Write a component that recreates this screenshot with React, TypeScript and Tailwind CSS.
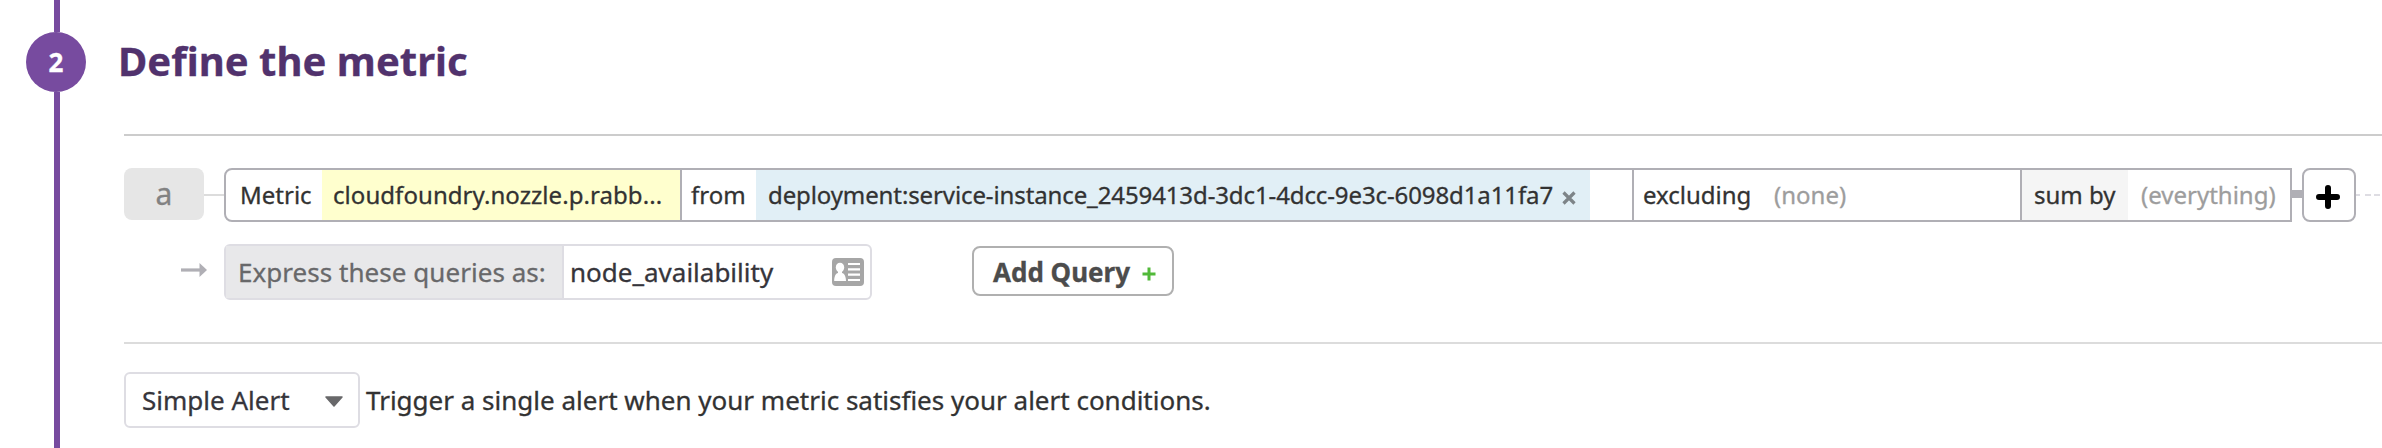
import React from "react";

function ContactCardIcon() {
  return (
    <svg width="32" height="28" viewBox="0 0 32 28" className="shrink-0">
      <rect width="32" height="28" rx="4" fill="#a6a6a6" />
      <ellipse cx="8" cy="9.500" rx="4.200" ry="4.800" fill="#fff" />
      <path d="M6 12h4v3c2.400 .6 4 3.500 4 8H2.200c0-4.500 1.400-7.400 3.800-8z" fill="#fff" />
      <path d="M16 6h12M16 11.300h12M16 16.600h12M16 22h12" stroke="#fff" strokeWidth="2.200" />
    </svg>
  );
}

function StepRail() {
  return (
    <div className="flex w-[60px] shrink-0 flex-col items-center">
      <div className="ml-[2px] h-8 w-[6px] bg-[#774b9f]" />
      <div className="flex h-[60px] w-[60px] items-center justify-center rounded-full bg-[#774b9f] text-[26px] font-bold text-white">
        2
      </div>
      <div className="ml-[2px] w-[6px] grow bg-[#774b9f]" />
    </div>
  );
}

function QueryRow() {
  return (
    <div className="flex h-[54px] items-start text-[24px] text-[#323232]">
      <div className="flex h-[52px] w-20 shrink-0 items-center justify-center rounded-lg bg-[#e6e6e6] pb-px text-[30px] text-[#828282]">
        a
      </div>
      <div className="mt-[26px] h-[2px] w-5 shrink-0 bg-[#dcdcdc]" />
      <div className="flex h-[54px] w-[2068px] shrink-0 overflow-hidden rounded-l-lg border-2 border-[#b0afb5] leading-[50px]">
        <div className="w-24 shrink-0 pl-[14px]">Metric</div>
        <div className="w-[358px] shrink-0 bg-[#ffffce] pl-[11px] tracking-[0.06px]">
          cloudfoundry.nozzle.p.rabb...
        </div>
        <div className="w-[76px] shrink-0 border-l-2 border-[#b0afb5] pl-[9px]">from</div>
        <div className="flex w-[834px] shrink-0 bg-[#e1eff6] pl-3">
          <span className="tracking-[-0.11px]">
            deployment:service-instance_2459413d-3dc1-4dcc-9e3c-6098d1a11fa7
          </span>
          <svg width="14" height="14" viewBox="0 0 14 14" className="ml-[9px] mt-[21px]">
            <path d="M1.500 1.500l11 11M12.500 1.500l-11 11" stroke="#7d8488" strokeWidth="3.200" />
          </svg>
        </div>
        <div className="w-[42px] shrink-0" />
        <div className="w-[142px] shrink-0 border-l-2 border-[#b0afb5] pl-[9px]">excluding</div>
        <div className="w-[246px] shrink-0 text-[#9d9d9d]">(none)</div>
        <div className="w-[108px] shrink-0 border-l-2 border-[#b0afb5] bg-[#f5f5f5] pl-3">sum by</div>
        <div className="pl-[13px] text-[#9d9d9d]">(everything)</div>
      </div>
      <div className="mt-[22px] h-2 w-[10px] shrink-0 bg-[#b0afb5]" />
      <button className="flex h-[54px] w-[54px] shrink-0 items-center justify-center rounded-lg border-2 border-[#b0afb5]">
        <svg width="24" height="24" viewBox="0 0 24 24" className="mr-[2px] mt-[3px]">
          <path d="M12 3v18M3 12h18" stroke="#000" strokeWidth="6" strokeLinecap="round" />
        </svg>
      </button>
      <svg width="26" height="2" viewBox="0 0 26 2" className="mt-[26px] shrink-0">
        <path d="M0 1h4M9 1h6M18 1h6" stroke="#dedde3" strokeWidth="2" />
      </svg>
    </div>
  );
}

function ExpressionRow() {
  return (
    <div className="mt-[22px] flex h-14 items-start text-[26px]">
      <svg width="26" height="14" viewBox="0 0 26 14" className="ml-[57px] mr-[17px] mt-[19px] shrink-0">
        <path d="M0 7h19" stroke="#b0afb5" strokeWidth="3.200" />
        <path d="M18.500 0L26 7l-7.500 7z" fill="#b0afb5" />
      </svg>
      <div className="flex h-14 w-[648px] shrink-0 rounded-md border-2 border-[#dedde3] leading-[52px]">
        <div className="w-[338px] shrink-0 border-r-2 border-[#dedde3] bg-[#e8e8ea] pl-[12px] tracking-[0.04px] text-[#68686a]">
          Express these queries as:
        </div>
        <div className="flex grow items-center justify-between pl-[6px] pr-[6px] text-[#36353b]">
          <span>node_availability</span>
          <ContactCardIcon />
        </div>
      </div>
      <button className="ml-[100px] mt-[2px] flex h-[50px] w-[202px] shrink-0 items-center rounded-lg border-2 border-[#b0b0b0] pl-[19px] font-bold text-[#4c4c4c]">
        <span className="mt-[2px]">Add Query</span>
        <svg width="14" height="14" viewBox="0 0 14 14" className="ml-[12px] mt-[5px]">
          <path d="M7 .5v13M.5 7h13" stroke="#51b939" strokeWidth="3" />
        </svg>
      </button>
    </div>
  );
}

function AlertRow() {
  return (
    <div className="mt-7 flex h-14 items-center text-[26px] text-[#323232]">
      <div className="flex h-14 w-[236px] shrink-0 items-center justify-between rounded-md border-2 border-[#dedde3] pl-4 pr-[15px] text-[#36353b]">
        <span>Simple Alert</span>
        <svg width="18" height="11" viewBox="0 0 18 11" className="mt-[2px]">
          <path d="M1 1h16L9 10z" fill="#68686a" stroke="#68686a" strokeWidth="1.500" strokeLinejoin="round" />
        </svg>
      </div>
      <p className="ml-[6px]">Trigger a single alert when your metric satisfies your alert conditions.</p>
    </div>
  );
}

export default function App() {
  return (
    <main className="flex h-[448px] w-[2382px] overflow-hidden whitespace-nowrap bg-white pl-[26px] font-['Noto_Sans',sans-serif] [-webkit-text-stroke:0.3px]">
      <StepRail />
      <section className="min-w-0 grow pl-[38px]">
        <h2 className="-ml-[6px] h-[134px] pt-[31px] text-[40px] font-bold leading-[60px] tracking-[0.03px] text-[#51326d]">
          Define the metric
        </h2>
        <div className="mb-8 h-[2px] bg-[#cccccc]" />
        <QueryRow />
        <ExpressionRow />
        <div className="mt-[42px] h-[2px] bg-[#dcdcdc]" />
        <AlertRow />
      </section>
    </main>
  );
}
